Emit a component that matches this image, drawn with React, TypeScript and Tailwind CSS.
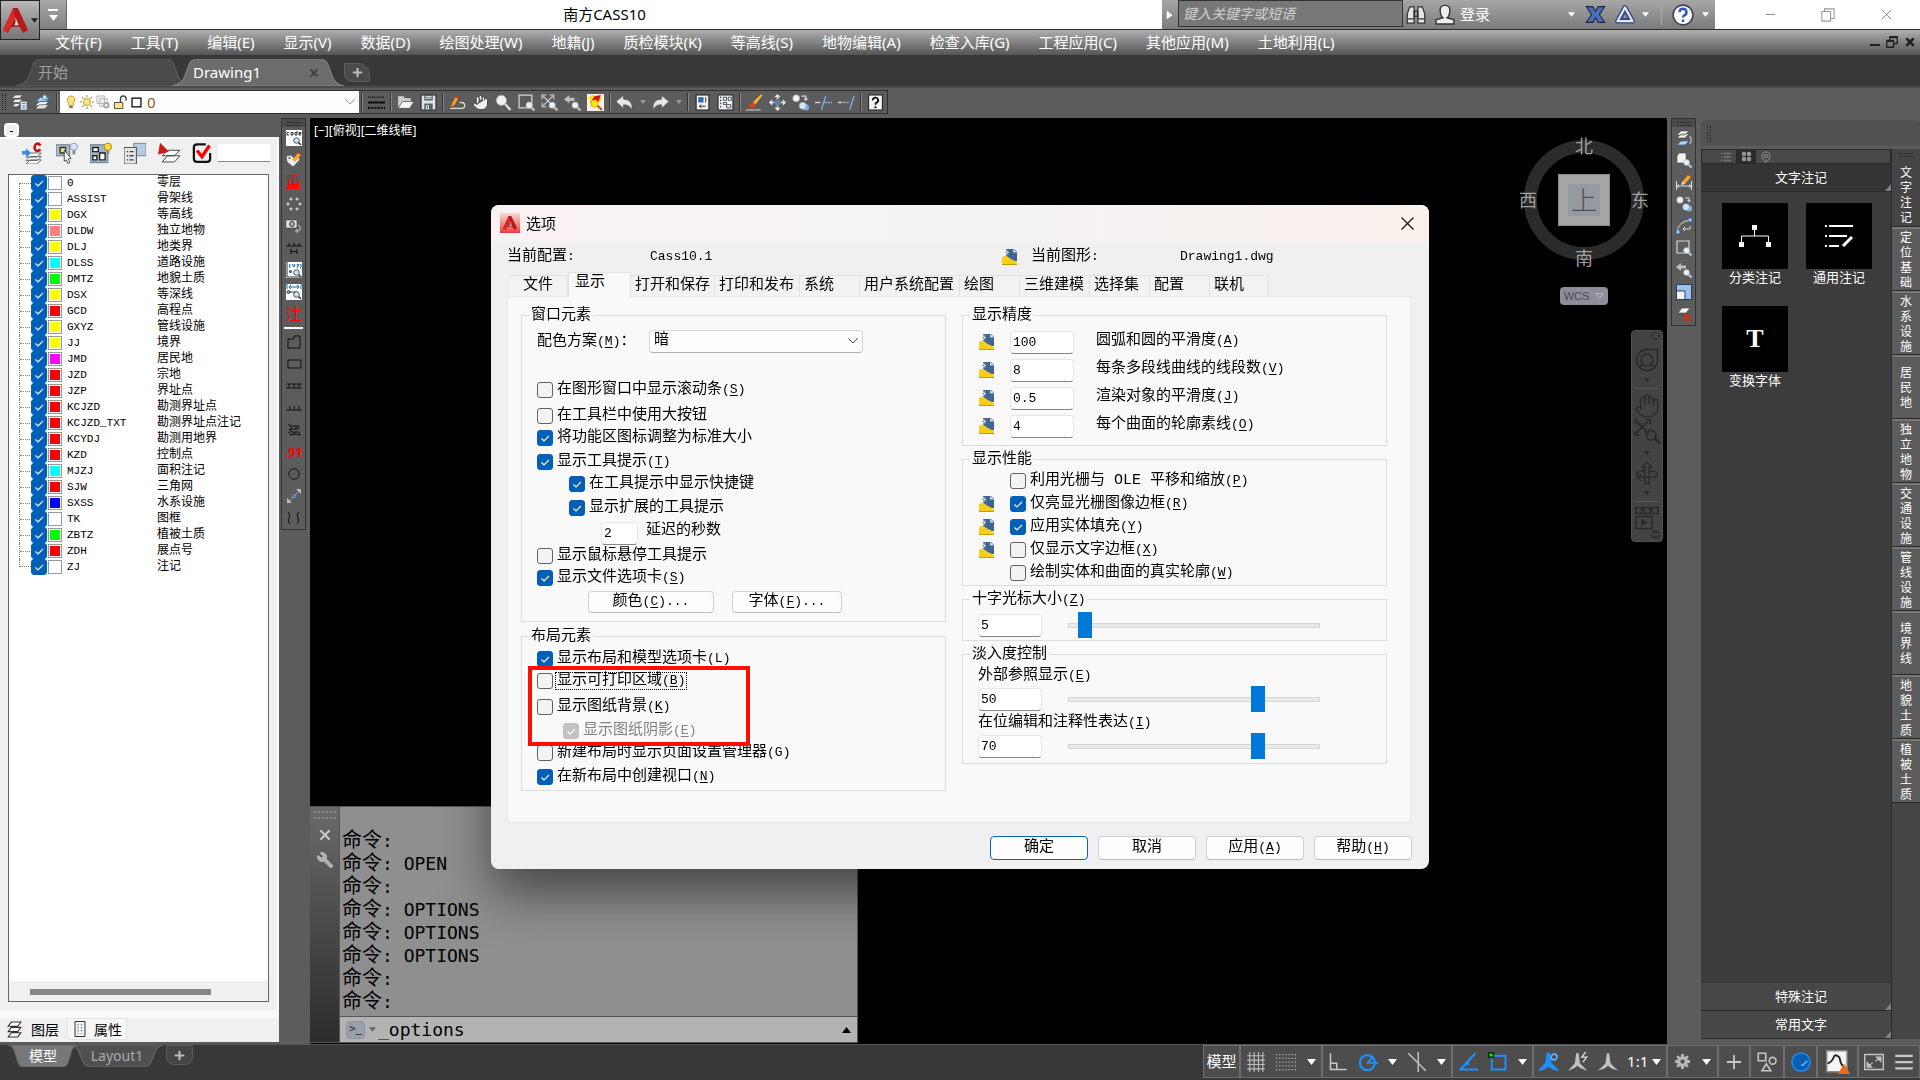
import { useState } from 'react'
import type { ReactNode } from 'react'
import clsx from 'clsx'
import { Hand, Wrench, X, Minus, Plus, MapPin, LayoutGrid, List } from 'lucide-react'

const layers = [
  ['0', '零层', '#ffffff'],
  ['ASSIST', '骨架线', '#ffffff'],
  ['DGX', '等高线', '#ffff00'],
  ['DLDW', '独立地物', '#ff7f7f'],
  ['DLJ', '地类界', '#ffff00'],
  ['DLSS', '道路设施', '#00ffff'],
  ['DMTZ', '地貌土质', '#00ff00'],
  ['DSX', '等深线', '#ffff00'],
  ['GCD', '高程点', '#ff0000'],
  ['GXYZ', '管线设施', '#ffff00'],
  ['JJ', '境界', '#ffff00'],
  ['JMD', '居民地', '#ff00ff'],
  ['JZD', '宗地', '#ff0000'],
  ['JZP', '界址点', '#ff0000'],
  ['KCJZD', '勘测界址点', '#ff0000'],
  ['KCJZD_TXT', '勘测界址点注记', '#ff0000'],
  ['KCYDJ', '勘测用地界', '#ff0000'],
  ['KZD', '控制点', '#ff0000'],
  ['MJZJ', '面积注记', '#00ffff'],
  ['SJW', '三角网', '#ff0000'],
  ['SXSS', '水系设施', '#0000ff'],
  ['TK', '图框', '#ffffff'],
  ['ZBTZ', '植被土质', '#00ff00'],
  ['ZDH', '展点号', '#ff0000'],
  ['ZJ', '注记', '#ffffff'],
]

const menus = [
  '文件(F)', '工具(T)', '编辑(E)', '显示(V)', '数据(D)', '绘图处理(W)', '地籍(J)', '质检模块(K)',
  '等高线(S)', '地物编辑(A)', '检查入库(G)', '工程应用(C)', '其他应用(M)', '土地利用(L)',
]

const paletteTabs = [
  '文字注记', '定位基础', '水系设施', '居民地', '独立地物', '交通设施', '管线设施', '境界线', '地貌土质', '植被土质',
]

const history = ['', 'OPEN', '', 'OPTIONS', 'OPTIONS', 'OPTIONS', '', '']

/* ---------- icons ---------- */

function Svg({ s = 18, children }: { s?: number; children: ReactNode }) {
  return (
    <svg width={s} height={s} viewBox="0 0 16 16" fill="none" className="shrink-0" aria-hidden="true">
      {children}
    </svg>
  )
}

const smallLens = (
  <>
    <path d="M12.5 12.5l3 3" stroke="#c8c8c8" strokeWidth="2" />
    <circle cx="10.5" cy="10.5" r="3" fill="#e8f0f6" stroke="#9aa4ac" strokeWidth=".6" />
  </>
)

const darkLens = (
  <>
    <path d="M12.5 12.5l2.5 2.5" stroke="#333" strokeWidth="1.6" />
    <circle cx="10.5" cy="10.5" r="2.8" fill="#cfe3f2" stroke="#345" strokeWidth=".9" />
  </>
)

const pencil = (
  <>
    <path d="M6 8l6-7 3 2-6 7z" fill="#f5a623" />
    <path d="M12 1l3 2 .8-1.2L13 0z" fill="#c0392b" />
    <path d="M6 8l3 2-3.6 1z" fill="#fff" />
  </>
)

const icons: Record<string, ReactNode> = {
  logo: (
    <>
      <path d="M6.500 0h3L16 14l-3 2-2.500-4h-5L3 16l-3-2z" fill="#b5191c" />
      <path d="M6.500 0L0 14l3 2 5-9z" fill="#d8292b" />
      <path d="M8 6l-2 5h4z" fill="#f3dede" />
      <path d="M8 6l-2.500 6 1.500-.5L8 9z" fill="#7d0d10" />
    </>
  ),
  layerProps: (
    <>
      <path d="M4 1h7L8 4H1zM4 5h7L8 8H1zM4 9h5l-3 3H1z" fill="#f2f2f2" stroke="#333" strokeWidth=".5" />
      <path d="M9 7h6v8H9z" fill="#e9f2fb" stroke="#666" strokeWidth=".6" />
      <path d="M10.500 9h3M10.500 11h3M10.500 13h3" stroke="#3a7bd5" />
    </>
  ),
  layerMatch: (
    <>
      <path d="M5 7h9l-4 4H1z" fill="#f2f2f2" stroke="#333" strokeWidth=".5" />
      <path d="M5 10h9l-4 4H1z" fill="#e0e0e0" stroke="#333" strokeWidth=".5" />
      <path d="M6 3h9l-4 4H2z" fill="#a9cdf0" stroke="#2d5f94" strokeWidth=".7" />
      <circle cx="10" cy="3" r="2.200" fill="#c9dff4" stroke="#2d5f94" strokeWidth=".6" />
    </>
  ),
  bulb: (
    <>
      <path d="M8 1a4.500 4.500 0 0 1 2.500 8.200V12h-5V9.200A4.500 4.500 0 0 1 8 1z" fill="#ffe27a" stroke="#a8861c" strokeWidth=".8" />
      <path d="M6 12.500h4v2.500H6z" fill="#777" />
    </>
  ),
  sun: (
    <>
      <path d="M8 0v2.500M8 13.500V16M0 8h2.500M13.500 8H16M2.300 2.300l1.800 1.800M11.900 11.900l1.800 1.800M13.700 2.300l-1.800 1.800M4.100 11.900l-1.800 1.800" stroke="#b48a1b" strokeWidth="1.200" />
      <circle cx="8" cy="8" r="4" fill="#ffe27a" stroke="#a8861c" strokeWidth=".8" />
    </>
  ),
  frozen: (
    <>
      <path d="M1 1h8v8H1zM4 4h8v8H4z" stroke="#b5b5b5" fill="#eee" />
      <circle cx="11" cy="11" r="3.500" fill="#aaa" />
      <circle cx="11" cy="11" r="1.300" fill="#fff" />
    </>
  ),
  lock: (
    <>
      <path d="M8 8V4a3 3 0 0 1 6 0v2" stroke="#444" strokeWidth="1.500" />
      <path d="M1.500 8h9v6.500h-9z" fill="#f6e58a" stroke="#444" />
    </>
  ),
  square: <path d="M2.500 2.500h11v11h-11z" fill="#fff" stroke="#000" strokeWidth="1.500" />,
  linetype: (
    <>
      <path d="M0 3h16" stroke="#111" strokeWidth="1.500" strokeDasharray="1 1" />
      <path d="M0 8h16" stroke="#111" strokeWidth="2" />
      <path d="M0 13h16" stroke="#111" strokeWidth="2" strokeDasharray="2 1" />
    </>
  ),
  open: (
    <>
      <path d="M1 2h5l1.500 2H13v3H5L1 13z" fill="#cfcfcf" />
      <path d="M5 7h11l-4 6.500H1z" fill="#f4f4f4" stroke="#444" strokeWidth=".6" />
    </>
  ),
  save: (
    <>
      <path d="M1 1h14v14H1z" fill="#dfe3e8" stroke="#2b2b2b" />
      <path d="M4 1h8v5H4zM4 9h8v6H4z" fill="#5a6470" />
      <path d="M5 2.500h6M5 4h6M6 11h2v3H6z" stroke="#fff" strokeWidth=".8" />
    </>
  ),
  sketch: (
    <>
      <path d="M1 13.500h11.500a2.800 2.800 0 0 0 0-5.500H10" stroke="#ddd" strokeWidth="1.200" />
      <path d="M1 13l1.500-4L6 2.500l3 1.700L5.500 10.500z" fill="#f0a030" stroke="#5e3a00" strokeWidth=".5" />
      <path d="M6 2.500l3 1.700 1-1.700-3-1.500z" fill="#c0392b" />
    </>
  ),
  lens: (
    <>
      <path d="M9 9l5.500 6" stroke="#ddd" strokeWidth="2.200" />
      <circle cx="6" cy="6" r="4.800" fill="#eef2f5" stroke="#999" strokeWidth=".6" />
    </>
  ),
  zoomWindow: (
    <>
      <path d="M1 1h12v12H1z" stroke="#d4d4d4" strokeWidth="1.200" />
      {smallLens}
    </>
  ),
  zoomExtents: (
    <>
      <path d="M2 2l9 9M11 2l-9 9M1 5V1h4M8 1h4v4M1 8v4h4" stroke="#d4d4d4" />
      {smallLens}
    </>
  ),
  zoomPrev: (
    <>
      <path d="M0 5l5-4v2.500h5v3H5V9z" fill="#b9bdbd" />
      {smallLens}
    </>
  ),
  zoomRed: (
    <>
      <path d="M0 0h16v16H0z" fill="#f7f2e8" />
      <path d="M1 4q3-5 7-2l5-1v6L9 9z" fill="#ffe600" />
      <path d="M3 8l4-6 6-1-2 6z" fill="#e01010" />
      <circle cx="7" cy="9" r="3.500" fill="#ffe600" stroke="#c98a00" strokeWidth=".6" />
      <path d="M10 11l4 4" stroke="#b55a10" strokeWidth="2" />
    </>
  ),
  undo: <path d="M0 7l7-5.500V5q9 0 8 10-2-5-8-5v3.500z" fill="#e6e6e6" stroke="#333" strokeWidth=".4" />,
  redo: <path d="M16 7L9 1.500V5Q0 5 1 15q2-5 8-5v3.500z" fill="#e6e6e6" stroke="#333" strokeWidth=".4" />,
  sheet: (
    <>
      <path d="M2 1h12v14H2z" fill="#f2f2f2" stroke="#222" />
      <path d="M4 3h5v5H4z" fill="#2c6bb8" />
      <path d="M11 3v5M5 11.500h6M5 11.500l2-1.500M5 11.500l2 1.500" stroke="#333" strokeWidth=".9" />
    </>
  ),
  sheets: (
    <>
      <path d="M1 1h14v14H1z" fill="#f2f2f2" stroke="#222" />
      <path d="M3 3h1M3 6h1M3 9h1M3 12h1" stroke="#222" strokeWidth="1.500" />
      <path d="M6 3h3v3H6zM10.500 3h3v3h-3zM6 8h3v2H6zM9 10h4v3H9z" stroke="#456" strokeWidth=".9" />
    </>
  ),
  brush: (
    <>
      <path d="M0 15h14" stroke="#ccc" />
      <path d="M6 8l8-8 2 1-7 9z" fill="#f0b23a" stroke="#714a00" strokeWidth=".4" />
      <path d="M3 13q0-5 4-5l2 2q-1 4-6 3z" fill="#d3451a" />
    </>
  ),
  move: (
    <>
      <path d="M8 0l3 3H5zM8 16l3-3H5zM0 8l3-3v6zM16 8l-3-3v6z" fill="#e6e6e6" />
      <path d="M8 2v3M8 11v3M2 8h3M11 8h3" stroke="#e6e6e6" strokeWidth="1.500" />
      <path d="M6.500 6.500h3v3h-3z" stroke="#5aa0f2" />
    </>
  ),
  copy: (
    <>
      <circle cx="4" cy="4" r="3.300" fill="#f2f2f2" stroke="#999" strokeWidth=".5" />
      <circle cx="13" cy="12.500" r="3" fill="#7fb2e5" />
      <circle cx="10" cy="11" r="3.300" fill="#d6e8f8" stroke="#6c9ac6" strokeWidth=".5" />
      <path d="M9 2h4v3M11.500 4l1.500 2 1.500-2" stroke="#ddd" />
    </>
  ),
  trim: (
    <>
      <path d="M0 8h5" stroke="#ddd" strokeWidth="1.200" />
      <path d="M10 2L6 15M9 8h2M12 8h2M15 8h1" stroke="#7fb2f0" strokeWidth="1.200" />
    </>
  ),
  extend: (
    <>
      <path d="M0 8h4" stroke="#ddd" strokeWidth="1.200" />
      <path d="M5 8h2M8 8h2M15 2l-4 13" stroke="#7fb2f0" strokeWidth="1.200" />
    </>
  ),
  help: (
    <>
      <path d="M1.500 1h13v14h-13z" fill="#f4f4f4" stroke="#222" />
      <path d="M5.500 6a2.500 2.500 0 1 1 3.500 2.200q-1 .5-1 1.800M8 11.500v2" stroke="#111" strokeWidth="1.800" />
    </>
  ),
  codeLens: (
    <>
      <path d="M0 0h16v16H0z" fill="#fff" />
      <path d="M3 2.500H1v2.500h2M5 2.500h2V5H5zM11 1v4H9V2.500h2M15 5h-2V2.500h2v1.200h-2" stroke="#222" strokeWidth=".9" />
      {darkLens}
    </>
  ),
  tagPencil: (
    <>
      <path d="M0 4l5-1 3 3 4-2 2 4-7 7-6-5z" fill="#e8e8e8" stroke="#333" strokeWidth=".6" />
      <circle cx="3.500" cy="6" r="1" fill="#444" />
      {pencil}
    </>
  ),
  points: (
    <path d="M4 2h2v2H4zM10 2h2v2h-2zM1 7h2v2H1zM13 7h2v2h-2zM4 12h2v2H4zM10 12h2v2h-2z" fill="#9fb4c4" stroke="#ddd" strokeWidth=".6" />
  ),
  camera: (
    <>
      <path d="M0 2h11v8H0z" fill="#e6e6e6" stroke="#333" strokeWidth=".6" />
      <circle cx="6" cy="6" r="2.500" fill="#9bb" stroke="#333" />
      <path d="M12 7q4 2 1 6h-3M11.500 11L9.500 13l2 2" stroke="#ccc" />
    </>
  ),
  slopeH: <path d="M0 6h16M3 6V3M8 6V3M13 6V3M5 9v5M11 9v5M5 11.500h6" stroke="#111" strokeWidth="1.100" />,
  xyLens: (
    <>
      <path d="M0 0h16v16H0z" fill="#fff" />
      <path d="M1 0v15h15" stroke="#333" />
      <path d="M4 2Q2.500 4 4 6M6 2l2 3M9 2L8 5M11 2l1 2M13 2l-2 4M14.500 2q1.500 2 0 4" stroke="#1464b4" />
      <circle cx="4.500" cy="9.500" r="1.500" fill="#1464b4" />
      {darkLens}
    </>
  ),
  distLens: (
    <>
      <path d="M0 0h16v16H0z" fill="#fff" />
      <path d="M3 3h10M3 3l2-2M3 3l2 2M13 3l-2-2M13 3l-2 2M1 0v5M15 0v5" stroke="#1464b4" />
      <path d="M2 8h8" stroke="#333" />
      <circle cx="2.500" cy="8" r="1.500" stroke="#333" />
      {darkLens}
    </>
  ),
  poly: <path d="M2 14V5h6V2h6v12z" stroke="#111" />,
  rect: <path d="M2 4h13v8H2z" stroke="#111" />,
  wall: <path d="M0 6h16M0 10h16M3 6v4M8 6v4M13 6v4" stroke="#111" />,
  slope: <path d="M0 10h16M4 10V6M8.500 10V6M13 10V6" stroke="#111" />,
  crag: <path d="M2 2l3 2h8l-1 3H6L3 8l3 2h7l1 3-4-1-6 1M5 4v4M10 4v3M8 10v3M2 10l4 3" stroke="#111" />,
  circleDot: (
    <>
      <circle cx="8" cy="8" r="5.200" stroke="#111" />
      <path d="M7.500 8h1" stroke="#111" />
    </>
  ),
  dblArrow: (
    <>
      <path d="M3 13L13 3" stroke="#bbb" strokeDasharray="3 1" />
      <path d="M15 1v5l-5-5zM1 15v-5l5 5z" fill="#bbb" />
      <path d="M7 7h2.500v2.500H7z" stroke="#4b8ef0" />
    </>
  ),
  waves: <path d="M2 2q3 3 1 6t1 6M13 2q-3 3-1 6t-1 6" stroke="#111" />,
  layerSwap: (
    <>
      <path d="M5 1h8L9 5H1zM5 4h8L9 8H1z" fill="#f2f2ea" stroke="#333" strokeWidth=".5" />
      <path d="M5 11h8l-4 4H1z" fill="#b4d2f2" stroke="#2d5f94" strokeWidth=".7" />
      <path d="M13 7h2v6h-2" stroke="#ccc" />
    </>
  ),
  boxLens: (
    <>
      <path d="M1 4l2-3h7v7l-2 3H1z" fill="#f2f2f2" stroke="#333" strokeWidth=".5" />
      {smallLens}
    </>
  ),
  dimPencil: (
    <>
      <path d="M.5 7v9M15.500 7v9M1 12h14M1 12l2-1.500M1 12l2 1.500M15 12l-2-1.500M15 12l-2 1.500" stroke="#ddd" />
      {pencil}
    </>
  ),
  arcEdit: (
    <>
      <path d="M1 14Q2 4 14 2" stroke="#aaa" strokeWidth="1.300" />
      <path d="M.5 12.500h3v3h-3zM12.500.5h3v3h-3z" fill="#cfe0fb" stroke="#3f86ee" />
      <path d="M14 8v3H7M9 9l-2 2 2 2" stroke="#ddd" />
    </>
  ),
  scaleBox: (
    <>
      <path d="M.5.5h15v15H.5z" fill="#9cc0ea" stroke="#20406c" />
      <path d="M.5 7h8.500v8.500H.5z" fill="#f4f4f4" stroke="#20406c" />
    </>
  ),
  layerDelete: (
    <>
      <path d="M6 2h8l-4 5H2z" fill="#f2f2f2" stroke="#333" strokeWidth=".5" />
      <path d="M8 8l6 7M14 8l-6 7" stroke="#e02a10" strokeWidth="2.200" />
    </>
  ),
  drawingFile: (
    <>
      <path d="M4 0h8l3 3v9H4z" fill="#3f6593" />
      <path d="M11 0l4 3.500h-4z" fill="#cbd9e8" />
      <path d="M1 3.500h6M4 .5v6M2 1.500l4 4M6 1.500l-4 4" stroke="#fff" strokeWidth=".9" />
      <path d="M3.500 3h1v1h-1z" fill="#234" />
      <path d="M0 8l4-1.500 4 3 7 3.500v3H0z" fill="#f5cf1b" />
      <path d="M0 15.500h15" stroke="#c99a00" />
    </>
  ),
  binoculars: (
    <>
      <path d="M1 14.500V7l2-5.500h3.500v13zM9.500 14.500v-13H13L15 7v7.500z" fill="#e6e6e6" stroke="#333" />
      <path d="M6.500 5h3v4h-3zM1.500 11h5M9.500 11h5" stroke="#333" />
    </>
  ),
  user: (
    <>
      <path d="M8 1q4 0 3.500 4.500Q11 9 9.500 10l5 1.500v3h-13v-3l5-1.500Q5 9 4.500 5.500 4 1 8 1z" fill="#eee" stroke="#333" />
    </>
  ),
  exchange: <path d="M1 2h5l2 3.500L10 2h5l-4 6 4 6h-5l-2-3.500L6 14H1l4-6z" fill="#4a6fc0" stroke="#223" strokeWidth=".8" />,
  a360: (
    <>
      <path d="M8 2.500l5.500 10h-11z" stroke="#35457c" strokeWidth="3.400" strokeLinejoin="round" />
      <path d="M8 2.500l5.500 10h-11z" stroke="#e4e8f4" strokeWidth="1.600" strokeLinejoin="round" />
      <path d="M8 6.500l2 4H6z" fill="#8d96b8" stroke="#35457c" strokeWidth=".7" />
    </>
  ),
  helpRound: (
    <>
      <circle cx="8" cy="8" r="7.200" fill="#fff" stroke="#445" strokeWidth="1.200" />
      <path d="M5.500 6a2.500 2.500 0 1 1 3.500 2.200q-1 .5-1 1.600M8 11.200v1.800" stroke="#2956c4" strokeWidth="1.800" />
    </>
  ),
  toC: (
    <>
      <path d="M6 8h8l-3 3H3zM6 10.500h8l-3 3H3zM6 13h8l-3 3H3z" fill="#fff" stroke="#555" strokeWidth=".6" />
      <path d="M0 6.500h3V4.500L6.500 8 3 11.500V9H0z" fill="#3c8be0" />
      <path d="M13.500 2.500Q12 .5 10.300 1.500 8.500 3 9.500 5.500q1.500 2 4 0" stroke="#c2120f" strokeWidth="1.800" />
    </>
  ),
  pickBulb: (
    <>
      <path d="M0 2h10v8H0z" fill="#a8bccb" stroke="#567" strokeWidth=".6" />
      <path d="M3 4h4v4H3z" fill="#f7e27a" stroke="#333" />
      <path d="M6 6l5 6-2 .3 1 2.700-1.500.5-1-2.500L6 14z" fill="#fff" stroke="#333" strokeWidth=".6" />
      <circle cx="13" cy="3.500" r="2.600" fill="#d6e8fb" stroke="#88a" strokeWidth=".6" />
      <path d="M12 6h2v3h-2z" fill="#888" />
    </>
  ),
  blocksBulb: (
    <>
      <path d="M0 2h13v13H0z" fill="#9fb3c3" stroke="#567" strokeWidth=".6" />
      <path d="M2 4h4v3H2zM2 10h3v3H2zM7 8h4v5H7z" fill="#fff" stroke="#222" />
      <circle cx="13" cy="3.500" r="2.700" fill="#ffd84a" stroke="#a77d00" strokeWidth=".6" />
      <path d="M12 6h2v2.500h-2z" fill="#888" />
    </>
  ),
  listPic: (
    <>
      <path d="M7 1h9v9H7z" fill="#b4cde0" stroke="#678" strokeWidth=".6" />
      <path d="M0 4h9v12H0z" fill="#e6e6e6" stroke="#555" strokeWidth=".8" />
      <path d="M2 7h1M4 7h3M2 10h1M4 10h3M2 13h1M4 13h3" stroke="#444" />
    </>
  ),
  redLayers: (
    <>
      <path d="M7 6h9l-4 4H3zM7 10h9l-4 4.500H3z" fill="#fff" stroke="#444" strokeWidth=".7" />
      <path d="M0 9l1.500-8.500L8 7z" fill="#c81d1d" />
    </>
  ),
  redCheck: (
    <>
      <path d="M11 1H4Q1.500 1 1.500 3.500v9Q1.500 15 4 15h8q2.500 0 2.500-2.500V8" stroke="#111" strokeWidth="1.800" />
      <path d="M4 6l4 5 6-9" stroke="#f00" strokeWidth="2.600" />
    </>
  ),
  sheetsTab: <path d="M5 1h9l-3 4H2zM5 6h9l-3 4H2zM5 11h9l-3 4H2z" fill="#fff" stroke="#333" />,
  propsTab: (
    <>
      <path d="M3 .5h10v15H3z" fill="#f4f4f4" stroke="#333" />
      <path d="M6 3v10M9.500 3v10" stroke="#7a96ac" strokeWidth="1.500" strokeDasharray="1.500 1.500" />
    </>
  ),
  // status bar
  grid: <path d="M3 0v16M6.500 0v16M10 0v16M13.500 0v16M1 3h14M1 6.500h14M1 10h14M1 13.500h14" stroke="#bdbdbd" strokeWidth=".9" />,
  snap: <path d="M0 2h16M0 5h16M0 8h16M0 11h16M0 14h16" stroke="#b0b0b0" strokeDasharray="1 1.500" />,
  ortho: <path d="M2 1v13h13M2 9h5v5" stroke="#c8c8c8" strokeWidth="1.200" />,
  polar: (
    <>
      <circle cx="7.500" cy="8.500" r="6" stroke="#1e90ff" strokeWidth="1.800" />
      <path d="M16 8.500H8L12 3" stroke="#1e90ff" strokeWidth="1.600" />
    </>
  ),
  iso: <path d="M1 1l14 14M9 0v16" stroke="#c0c0c0" strokeWidth="1.200" />,
  otrack: (
    <>
      <path d="M14 1L2 14h14" stroke="#1e90ff" strokeWidth="1.600" />
      <path d="M6 7.500h3v3H6z" fill="#1e90ff" />
    </>
  ),
  osnap: (
    <>
      <path d="M3 3h11v11H3z" stroke="#1e90ff" strokeWidth="1.500" />
      <path d="M0 0h5v5H0z" fill="#0b3d0b" />
      <path d="M1.500 1.500h2v2h-2z" fill="#1cff1c" />
    </>
  ),
  annoBlue: (
    <>
      <path d="M6.500 1h2l1 8 6 6-5.500-2-2.500-2-2.500 2-5 2 5.500-6z" fill="#1e90ff" stroke="#1e90ff" />
      <circle cx="12" cy="4" r="2.300" stroke="#5cb2ff" strokeWidth="1.300" />
    </>
  ),
  annoBolt: (
    <>
      <path d="M6.500 1h2l1 8 6 6-5.500-2-2.500-2-2.500 2-5 2 5.500-6z" fill="#c0c0c0" />
      <path d="M14 0l-3 4h4l-3 4" stroke="#e0e0e0" />
    </>
  ),
  anno: <path d="M7 1h2l1 8 6 6-5.500-2L8 11l-2.500 2L0 15l6-6z" fill="#c0c0c0" />,
  gear: (
    <>
      <path d="M8 1v14M1 8h14M3 3l10 10M13 3L3 13" stroke="#b8b8b8" strokeWidth="2.600" />
      <circle cx="8" cy="8" r="5" fill="#b8b8b8" />
      <circle cx="8" cy="8" r="2" fill="#4d4d4d" />
    </>
  ),
  isolate: (
    <>
      <path d="M1 1h6v6H1zM7.500 9.500L11 15H4z" stroke="#c4c4c4" strokeWidth="1.300" />
      <circle cx="12.500" cy="7" r="2.700" stroke="#c4c4c4" strokeWidth="1.300" />
    </>
  ),
  hardware: (
    <>
      <circle cx="8" cy="8" r="7.300" fill="#0a5fb4" stroke="#1e90ff" />
      <path d="M8 10.500h1.500L13 7" stroke="#5cb2ff" strokeWidth="1.200" />
    </>
  ),
  graphWarn: (
    <>
      <path d="M.5.500h13.500v14H.5z" fill="#f4f4f4" stroke="#888" />
      <path d="M1 9Q4 8 5 5t4 0q1 6 4 7" stroke="#222" strokeWidth="1.200" />
      <path d="M12 9l4 7H8z" fill="#f0691c" />
    </>
  ),
  clean: (
    <>
      <path d="M.5 2h15v12H.5z" stroke="#c4c4c4" strokeWidth="1.200" />
      <path d="M10 4h3.500v3.500zM6 12H2.500V8.500zM9 7.500L12 5M4 11l3-2.500" fill="#c4c4c4" stroke="#c4c4c4" />
    </>
  ),
  lines: <path d="M1 3h14M1 8h14M1 13h14" stroke="#c8c8c8" strokeWidth="1.800" />,
}

function Icon({ name, s }: { name: string; s?: number }) {
  return <Svg s={s}>{icons[name]}</Svg>
}

function Caret({ className }: { className?: string }) {
  return (
    <svg width="9" height="6" viewBox="0 0 9 6" className={clsx('shrink-0', className)} aria-hidden="true">
      <path d="M0 0h9L4.500 6z" fill="currentColor" />
    </svg>
  )
}

function Grip({ vertical }: { vertical?: boolean }) {
  return (
    <span
      className={clsx(
        'block shrink-0 border-dotted border-[#222]',
        vertical ? 'ml-0.5 h-4 w-1 border-x' : 'mx-auto mt-0.5 h-1 w-3.5 border-y',
      )}
    />
  )
}

/* ---------- top of the window ---------- */

function TitleBar() {
  return (
    <header className="flex h-[29px] bg-white">
      <button aria-label="应用程序菜单" className="z-10 flex h-10 w-10 shrink-0 items-center justify-between border border-[#222] bg-linear-to-b from-[#b8b8b8] to-[#777] pl-0.5 pr-px text-[#223]">
        <Icon name="logo" s={25} />
        <Caret className="h-[5px] w-[7px]" />
      </button>
      <button aria-label="自定义快速访问工具栏" className="flex w-[27px] shrink-0 flex-col items-center justify-center gap-1 border-r border-[#666] bg-linear-to-b from-[#a8a8a8] to-[#808080] text-white">
        <span className="h-0.5 w-2.5 bg-white" />
        <Caret />
      </button>
      <h1 className="flex-1 pr-5 text-center text-[15px] leading-[28px] text-black">南方CASS10</h1>
      <div className="flex h-[29px] items-center bg-linear-to-b from-[#a6a6a6] to-[#7b7b7b] text-white">
        <button aria-label="展开" className="flex w-4 justify-center">
          <Caret className="-rotate-90" />
        </button>
        <input
          aria-label="搜索"
          placeholder="键入关键字或短语"
          className="mb-0.5 h-[27px] w-[225px] border border-[#333] bg-[#787878] px-1 text-[14px] italic placeholder:text-[#d0d0d0]"
        />
        <button aria-label="搜索" className="ml-[3px]"><Icon name="binoculars" s={20} /></button>
        <button className="ml-2 flex items-center gap-1 text-[15px]">
          <Icon name="user" s={22} />
          登录
        </button>
        <Caret className="ml-[78px] h-[5px] w-[7px]" />
        <button aria-label="Exchange" className="ml-2.5"><Icon name="exchange" s={21} /></button>
        <button aria-label="A360" className="ml-2"><Icon name="a360" s={22} /></button>
        <Caret className="ml-1.5 h-[5px] w-[7px]" />
        <span className="ml-3 h-5 w-px bg-[#aaa]" />
        <button aria-label="帮助" className="ml-2.5"><Icon name="helpRound" s={22} /></button>
        <Caret className="ml-2 mr-1.5 h-[5px] w-[7px]" />
      </div>
      <div className="flex w-[205px] items-center pl-[26px] text-[#888]">
        <button aria-label="最小化" className="flex w-[58px] justify-center"><Minus size={15} strokeWidth={1.5} /></button>
        <button aria-label="还原" className="flex w-[58px] justify-center">
          <Svg s={14}><path d="M1 4h10v11H1zM4 4V1h11v11h-4" stroke="#999" strokeWidth="1.200" /></Svg>
        </button>
        <button aria-label="关闭" className="flex w-[58px] justify-center"><X size={17} strokeWidth={1.3} /></button>
      </div>
    </header>
  )
}

function MenuBar() {
  return (
    <nav className="flex h-[26px] items-center border-t border-[#2c2c2c] bg-linear-to-b from-[#b0b0b0] to-[#555] pb-0.5 pl-[55px] pr-1 text-[15px] text-white">
      <div className="flex flex-1 gap-[29px] whitespace-nowrap">
        {menus.map((m) => (
          <button key={m} className="leading-[22px]">{m}</button>
        ))}
      </div>
      <div className="flex items-center gap-1.5">
        <button aria-label="最小化文档" className="mt-1.5 h-0.5 w-2.5 bg-[#222]" />
        <button aria-label="还原文档">
          <Svg s={12}><path d="M1 6h9v9H1zM5 6V1h10v9h-5M1 7h9M5 2h10" stroke="#222" strokeWidth="1.800" /></Svg>
        </button>
        <button aria-label="关闭文档" className="text-[#222]"><X size={12} strokeWidth={5} /></button>
      </div>
    </nav>
  )
}

function DocTab({ active, className, children }: { active?: boolean; className?: string; children: ReactNode }) {
  return (
    <button className={clsx('relative flex h-[27px] items-center text-[15px]', active ? 'z-10 text-white' : 'text-[#a0a0a0]', className)}>
      <svg className="absolute inset-0 h-full w-full" viewBox="0 0 170 27" preserveAspectRatio="none" aria-hidden="true">
        <path
          d="M0 27Q10 26 13 16L17 5Q19 0 25 0H145Q152 0 154 5L158 16Q161 26 170 27z"
          fill={active ? '#6c6c6c' : '#4a4a4a'}
          stroke={active ? '#808080' : '#5c5c5c'}
        />
      </svg>
      <span className="relative flex w-full items-center justify-between">{children}</span>
    </button>
  )
}

function DocTabs() {
  return (
    <div className="flex h-[31px] items-end bg-[#383838]">
      <DocTab className="ml-4 w-[174px] pl-[22px]">开始</DocTab>
      <DocTab active className="-ml-[18px] w-[172px] pl-[21px] pr-6">
        Drawing1
        <X size={12} strokeWidth={4} className="text-[#444]" />
      </DocTab>
      <button aria-label="新图形" className="mb-1 flex h-[19px] w-[26px] items-center justify-center rounded-tr-xl rounded-bl-lg border border-[#5c5c5c] bg-[#4a4a4a] text-[#bbb]">
        <Plus size={13} strokeWidth={4} />
      </button>
    </div>
  )
}

function ToolBtn({ name, label }: { name: string; label?: string }) {
  return (
    <button aria-label={label ?? name} className="flex w-[23px] shrink-0 justify-center">
      <Icon name={name} s={17} />
    </button>
  )
}

function Sep() {
  return <span className="mx-0.5 h-[18px] w-0.5 shrink-0 border-l border-[#333] bg-[#888]" />
}

function Toolbar() {
  return (
    <div className="border-t-2 border-[#4c4c4c] bg-[#5c5c5c] pb-1 pt-0.5">
      <div className="flex h-6 w-fit items-center border border-l-0 border-[#2e2e2e]">
        <Grip vertical />
        <span className="w-0.5" />
        <ToolBtn name="layerProps" />
        <ToolBtn name="layerMatch" />
        <Sep />
        <button aria-label="图层" className="flex h-[22px] w-[299px] items-center gap-0.5 bg-[#fdfdfd] pl-1 pr-1 text-[15px] text-[#8a5a2c]">
          <Icon name="bulb" s={14} />
          <Icon name="sun" s={14} />
          <Icon name="frozen" s={15} />
          <Icon name="lock" s={15} />
          <Icon name="square" s={13} />
          <span className="ml-0.5 flex-1 text-left">0</span>
          <svg width="10" height="6" viewBox="0 0 10 6" fill="none" aria-hidden="true"><path d="M.5.5L5 5 9.500.5" stroke="#999" /></svg>
        </button>
        <Sep />
        <ToolBtn name="linetype" />
        <Sep />
        <ToolBtn name="open" />
        <ToolBtn name="save" />
        <Sep />
        <ToolBtn name="sketch" />
        <button aria-label="平移" className="flex w-[23px] justify-center text-[#333]">
          <Hand size={17} fill="#f2f2f2" strokeWidth={1.2} />
        </button>
        {['lens', 'zoomWindow', 'zoomExtents', 'zoomPrev', 'zoomRed'].map((n) => <ToolBtn key={n} name={n} />)}
        <Sep />
        <ToolBtn name="undo" />
        <span className="flex w-[13px] justify-center text-[#999]"><Caret className="h-1 w-1.5" /></span>
        <ToolBtn name="redo" />
        <span className="flex w-[13px] justify-center text-[#999]"><Caret className="h-1 w-1.5" /></span>
        <Sep />
        <ToolBtn name="sheet" />
        <ToolBtn name="sheets" />
        <Sep />
        {['brush', 'move', 'copy', 'trim', 'extend'].map((n) => <ToolBtn key={n} name={n} />)}
        <Sep />
        <ToolBtn name="help" />
      </div>
    </div>
  )
}

/* ---------- layer panel ---------- */

function Check({ id, checked, disabled }: { id: string; checked?: boolean; disabled?: boolean }) {
  return (
    <span className="relative flex h-4 w-4 shrink-0">
      <input
        id={id}
        type="checkbox"
        defaultChecked={checked}
        disabled={disabled}
        className="peer h-4 w-4 appearance-none rounded-[3px] border border-[#626262] bg-[#f3f3f3] checked:border-[#005fb8] checked:bg-[#005fb8] disabled:border-[#c2c2c2] disabled:bg-[#c2c2c2]"
      />
      <svg viewBox="0 0 16 16" fill="none" className="pointer-events-none absolute inset-0 hidden peer-checked:block" aria-hidden="true">
        <path d="M4.500 8.500L7 11l5-5" stroke="#fff" strokeWidth="1.200" />
      </svg>
    </span>
  )
}

function LayerPanel() {
  return (
    <aside className="flex w-[279px] shrink-0 flex-col">
      <button aria-label="折叠" className="ml-1 mt-[5px] h-[14px] w-[15px] rounded-sm border-2 border-white bg-[#f0f0f0] text-[12px] leading-[9px] text-black">-</button>
      <div className="flex flex-1 flex-col border-2 border-l-0 border-[#fafafa] bg-[#f0f0f0] pb-2 pl-2 pr-2">
        <div className="flex h-[35px] items-center pb-2 pl-3.5">
          {['toC', 'pickBulb', 'blocksBulb', 'listPic', 'redLayers'].map((n) => (
            <button key={n} aria-label={n} className="mr-3 flex"><Icon name={n} s={22} /></button>
          ))}
          <button aria-label="redCheck" className="mr-1.5 flex"><Icon name="redCheck" s={20} /></button>
          <input aria-label="过滤图层" className="h-[18px] w-[52px] border-b border-[#888] bg-white px-1 text-[12px]" />
        </div>
        <div className="flex flex-1 flex-col border border-[#666] bg-white">
          <ul className="flex-1 pl-2.5 font-['Liberation_Mono','Noto_Sans_CJK_SC',monospace] text-black">
            {layers.map(([name, desc, color], i) => (
              <li key={name} className="flex h-4 items-center">
                <span
                  className={clsx(
                    'w-3 shrink-0 border-dotted border-[#777]',
                    i === 0 && 'h-2 self-end border-l border-t',
                    i === layers.length - 1 && 'h-2 self-start border-b border-l',
                    i > 0 && i < layers.length - 1 && 'relative h-4 border-l after:absolute after:top-2 after:w-3 after:border-t after:border-dotted after:border-[#777]',
                  )}
                />
                <Check id={`layer-${name}`} checked />
                <span className="mx-px h-3.5 w-3.5 shrink-0 border border-[#999] p-px">
                  <span className="block h-full w-full" style={{ backgroundColor: color }} />
                </span>
                <label htmlFor={`layer-${name}`} className="flex flex-1 pl-1 text-[11px] leading-4">
                  <span className="w-[90px]">{name}</span>
                  <span className="text-[12px]">{desc}</span>
                </label>
              </li>
            ))}
          </ul>
          <div className="flex h-5 items-center bg-[#f0f0f0] pb-1.5 pl-[21px]">
            <span className="mt-2 h-1.5 w-[181px] bg-[#868686]" />
          </div>
        </div>
      </div>
      <div className="h-1.5 bg-[#fafafa]" />
      <div className="mb-0.5 flex h-6 items-start bg-[#f0f0f0] text-[14px] text-black">
        <button className="flex h-[22px] items-center gap-2 pl-1.5 pr-2"><Icon name="sheetsTab" s={17} />图层</button>
        <button className="flex h-[22px] items-center gap-1.5 border border-[#e4e4e4] bg-[#f6f6f6] px-1"><Icon name="propsTab" s={16} />属性</button>
      </div>
    </aside>
  )
}

function SideBtn({ name, text }: { name?: string; text?: string }) {
  return (
    <button aria-label={text ?? name} className="flex h-[22px] w-full items-center justify-center text-[16px] leading-none text-[#f00]">
      {name ? <Icon name={name} s={16} /> : text}
    </button>
  )
}

function DrawBar() {
  return (
    <div className="ml-0.5 mr-1 h-fit w-[25px] shrink-0 border border-[#333] bg-[#5c5c5c]">
      <div className="h-2 bg-[#4a4a4a] pt-px"><Grip /></div>
      <SideBtn name="codeLens" />
      <SideBtn name="tagPencil" />
      <SideBtn text="重" />
      {['points', 'camera', 'slopeH', 'xyLens', 'distLens'].map((n) => <SideBtn key={n} name={n} />)}
      <SideBtn text="注" />
      <div className="mx-0.5 my-0.5 h-0.5 bg-white" />
      {['poly', 'rect', 'wall', 'slope', 'crag'].map((n) => <SideBtn key={n} name={n} />)}
      <button className="block h-[22px] w-full text-[13px] font-bold leading-[22px] text-[#f00]">.91</button>
      {['circleDot', 'dblArrow', 'waves'].map((n) => <SideBtn key={n} name={n} />)}
    </div>
  )
}

function ViewBar() {
  return (
    <div className="ml-1 mr-[5px] h-fit w-[25px] shrink-0 border border-[#333] bg-[#5c5c5c]">
      <div className="h-2 bg-[#4a4a4a] pt-px"><Grip /></div>
      {['layerSwap', 'boxLens', 'dimPencil', 'copy', 'arcEdit', 'zoomWindow', 'zoomPrev', 'scaleBox', 'layerDelete'].map((n) => (
        <SideBtn key={n} name={n} />
      ))}
    </div>
  )
}

/* ---------- drawing area ---------- */

function ViewCube() {
  return (
    <div className="absolute right-[18px] top-[15px] flex w-[130px] flex-col items-center">
      <div className="relative flex h-[134px] w-[130px] items-center justify-center text-[18px] leading-none text-[#a0a0a0]">
        <span className="absolute h-[120px] w-[120px] rounded-full border-[13px] border-[#2b2b2b]" />
        <span className="absolute top-1">北</span>
        <span className="absolute bottom-0">南</span>
        <span className="absolute left-0">西</span>
        <span className="absolute right-0">东</span>
        <span className="relative flex h-[52px] w-[52px] items-center justify-center border border-[#8a8a8a] bg-[#a6a6a6]">
          <span className="flex h-8 w-8 items-center justify-center bg-[#9599a0] text-[26px] font-light text-[#4c5058]">上</span>
        </span>
      </div>
      <button className="mt-5 flex h-[18px] w-12 items-center justify-center gap-1.5 rounded bg-[#8d8d9b] font-['Liberation_Sans',sans-serif] text-[11px] text-[#4b4b55]">
        WCS
        <svg width="9" height="6" viewBox="0 0 9 6" fill="none" aria-hidden="true"><path d="M.5.5h8L4.500 5z" stroke="#bbb" /></svg>
      </button>
    </div>
  )
}

function NavBar() {
  return (
    <div className="absolute right-1 top-[212px] flex h-[212px] w-8 flex-col items-center rounded border border-[#505050] bg-[#434343] text-[#2a2a2a]">
      <X size={9} strokeWidth={3} className="mr-0.5 self-end rounded-full bg-[#333] text-[#555]" />
      <span className="mt-2 flex">
        <Svg s={24}>
          <path d="M8 1h7v7a7 7 0 1 1-7-7z" stroke="#2a2a2a" />
          <circle cx="8" cy="8" r="4" stroke="#2a2a2a" />
          <path d="M3 13l2-2M13 13l-2-2" stroke="#2a2a2a" />
        </Svg>
      </span>
      <Caret className="my-1.5 h-1 w-1.5" />
      <span className="mb-1 h-px w-6 bg-[#555]" />
      <Hand size={26} strokeWidth={1.2} />
      <Svg s={26}>
        <path d="M1 1l8 8M9 1L1 9M0 3V0h3M7 0h3v3M0 7v3h3" stroke="#2a2a2a" />
        <circle cx="10.500" cy="10" r="3" stroke="#2a2a2a" />
        <path d="M13 12l3 3" stroke="#2a2a2a" strokeWidth="1.600" />
      </Svg>
      <Caret className="my-1.5 h-1 w-1.5" />
      <Svg s={24}>
        <path d="M6.500 15V4H5l3-3 3 3H9.500v11zM6 6.500Q1 7 1 9t7 2 7-2-5-2.500M4 9l-3 2 3 2" stroke="#2a2a2a" />
      </Svg>
      <Caret className="my-1.5 h-1 w-1.5" />
      <span className="mb-1 h-px w-6 bg-[#555]" />
      <Svg s={24}>
        <path d="M.5 1h4v4h-4zM6 1h4v4H6zM11.500 1h4v4h-4zM.5 7h11v8H.5z" stroke="#2a2a2a" />
        <path d="M4 8.500L8.500 11 4 13.500z" fill="#2a2a2a" />
      </Svg>
      <Minus size={9} strokeWidth={3} className="mb-0.5 mr-0.5 mt-auto self-end rounded-full bg-[#333] text-[#555]" />
    </div>
  )
}

function CommandLine() {
  return (
    <div className="mb-px mt-auto flex w-[548px] max-w-full border border-l-0 border-[#555]">
      <div className="flex w-[29px] shrink-0 flex-col items-center bg-linear-to-b from-[#6a6a6a] to-[#2c2c2c] text-[#c4c4c4]">
        <span className="mt-1 h-2 w-[22px] border-y-2 border-dotted border-[#888]" />
        <button aria-label="关闭命令行" className="mt-2"><X size={16} strokeWidth={3.5} /></button>
        <button aria-label="自定义" className="mt-2"><Wrench size={18} fill="#b0b0b0" strokeWidth={1.2} className="-scale-x-100" /></button>
      </div>
      <div className="flex-1 border-l border-[#555] bg-[#8f8f8f] font-['DejaVu_Sans_Mono','Noto_Sans_CJK_SC',monospace] text-[18px] text-black">
        <div className="px-0.5 pb-[3px] pt-[22px]">
          {history.map((h, i) => (
            <p key={i} className="h-[23px] whitespace-pre leading-[23px]"><span className="text-[20px]">命令</span>: {h}</p>
          ))}
        </div>
        <div className="flex h-[26px] items-center border-t border-[#555] bg-[#b3b3b3] pl-1.5 pr-1.5">
          <span className="flex h-[18px] w-[19px] items-center justify-center rounded-sm border border-[#8d939b] bg-[#9aa1ab] text-[11px] font-bold text-[#445]">&gt;_</span>
          <Caret className="ml-1 h-[5px] w-[7px] text-[#666]" />
          <input aria-label="命令" defaultValue="_options" className="ml-0.5 w-0 flex-1 bg-transparent leading-[24px]" />
          <Caret className="rotate-180" />
        </div>
      </div>
    </div>
  )
}

function Viewport() {
  return (
    <main className="relative flex min-h-[640px] min-w-0 flex-1 flex-col bg-black">
      <p className="px-1 pt-1 text-[12px] leading-[18px] text-white">[−][俯视][二维线框]</p>
      <ViewCube />
      <NavBar />
      <CommandLine />
    </main>
  )
}

/* ---------- tool palette ---------- */

function Tile({ label, children }: { label: string; children: ReactNode }) {
  return (
    <button className="flex h-[103px] w-[66px] flex-col items-center text-[13px] leading-4 text-white">
      <span className="flex h-[66px] w-[66px] items-center justify-center bg-black">{children}</span>
      {label}
    </button>
  )
}

function Palette() {
  return (
    <aside className="flex w-[219px] shrink-0 flex-col pt-0.5">
      <div className="h-[26px] rounded-t bg-[#525252] px-1 pt-1.5"><Grip vertical /></div>
      <div className="mt-[3px] flex flex-1">
        <div className="flex flex-1 flex-col bg-[#3c3c3c] text-[13px] text-white">
          <div className="flex h-[15px] border border-[#2a2a2a] bg-[#484848] pl-3.5 text-[#777]">
            <button aria-label="列表" className="flex w-5 items-center justify-center"><List size={12} strokeWidth={3} /></button>
            <button aria-label="图标" className="flex w-5 items-center justify-center bg-[#2c2c2c] text-[#999]"><LayoutGrid size={11} fill="#999" /></button>
            <button aria-label="位置" className="flex w-5 items-center justify-center"><MapPin size={12} strokeWidth={3} /></button>
          </div>
          <PaletteHeader dark>文字注记</PaletteHeader>
          <div className="flex flex-1 flex-wrap content-start gap-x-[18px] pl-[21px] pt-[11px]">
            <Tile label="分类注记">
              <svg width="34" height="24" viewBox="0 0 34 24" aria-hidden="true">
                <path d="M14 1h5v5h-5zM1 18h5v5H1zM28 18h5v5h-5z" fill="#fff" />
                <path d="M16.500 5v7M3.500 19v-7h27v7" stroke="#fff" fill="none" />
              </svg>
            </Tile>
            <Tile label="通用注记">
              <svg width="30" height="26" viewBox="0 0 30 26" fill="none" aria-hidden="true">
                <path d="M1 3h2M5 3h24M1 13h2M5 13h18M1 23h2M5 23h10" stroke="#fff" strokeWidth="2" />
                <path d="M19 23l9-9" stroke="#fff" strokeWidth="3" />
              </svg>
            </Tile>
            <Tile label="变换字体">
              <span className="font-['Liberation_Serif',serif] text-[26px] font-bold leading-none">T</span>
            </Tile>
          </div>
          <PaletteHeader>特殊注记</PaletteHeader>
          <PaletteHeader>常用文字</PaletteHeader>
        </div>
        <div className="flex w-[29px] flex-col border-l border-[#2a2a2a] bg-[#454545]">
          <div className="h-3.5 pt-0.5"><Grip /></div>
          {paletteTabs.map((t, i) => (
            <button
              key={t}
              className={clsx(
                'flex h-16 flex-col items-center justify-center border-b border-[#2a2a2a] text-[12px] leading-[15px] text-white',
                i === 0 ? 'bg-[#454545]' : 'border-t-2 border-t-[#777] bg-[#5c5c5c]',
              )}
            >
              {t.split('').map((c, k) => <span key={k}>{c}</span>)}
            </button>
          ))}
        </div>
      </div>
      <div className="h-[5px] bg-[#5c5c5c]" />
    </aside>
  )
}

function PaletteHeader({ dark, children }: { dark?: boolean; children: ReactNode }) {
  return (
    <button className={clsx('flex h-7 items-center border-b border-[#2a2a2a] pl-4', dark ? 'bg-[#343434]' : 'bg-[#474747]')}>
      <span className="flex-1 text-center">{children}</span>
      <svg width="6" height="7" viewBox="0 0 6 7" className="self-end" aria-hidden="true"><path d="M6 0v7H0z" fill="#808080" /></svg>
    </button>
  )
}

/* ---------- status bar ---------- */

function LayoutTab({ active, className, children }: { active?: boolean; className?: string; children: ReactNode }) {
  return (
    <button className={clsx('relative h-[22px] text-[14px] leading-[20px]', active ? 'z-10 text-white' : 'text-[#aaa]', className)}>
      <svg className="absolute inset-0 h-full w-full" viewBox="0 0 80 22" preserveAspectRatio="none" aria-hidden="true">
        <path d="M0 0Q6 1 8 8l3 9q2 5 7 5h44q5 0 7-5l3-9q2-7 8-8z" fill={active ? '#787878' : '#505050'} stroke="#666" />
      </svg>
      <span className="relative">{children}</span>
    </button>
  )
}

function StatusGroup({ className, children }: { className?: string; children: ReactNode }) {
  return <div className={clsx('flex items-center justify-around border border-[#6e6e6e] bg-[#4d4d4d] text-white', className)}>{children}</div>
}

function StatusBtn({ name }: { name: string }) {
  return <button aria-label={name} className="flex"><Icon name={name} s={20} /></button>
}

function StatusBar() {
  return (
    <footer className="flex h-9 items-start border-t border-[#555] bg-[#383838]">
      <LayoutTab active className="ml-2 w-[70px]">模型</LayoutTab>
      <LayoutTab className="-ml-2 w-[94px]">Layout1</LayoutTab>
      <button aria-label="新建布局" className="ml-0.5 flex h-5 w-[27px] items-center justify-center rounded-bl-lg rounded-br-lg border border-[#5c5c5c] bg-[#454545] text-[#bbb]">
        <Plus size={13} strokeWidth={4} />
      </button>
      <div className="ml-auto flex h-[33px] bg-[#4d4d4d] text-[15px]">
        <StatusGroup className="w-[37px]"><button>模型</button></StatusGroup>
        <StatusGroup className="w-[82px]"><StatusBtn name="grid" /><StatusBtn name="snap" /><Caret /></StatusGroup>
        <StatusGroup className="w-[130px]"><StatusBtn name="ortho" /><StatusBtn name="polar" /><Caret /><StatusBtn name="iso" /><Caret /></StatusGroup>
        <StatusGroup className="w-[81px]"><StatusBtn name="otrack" /><StatusBtn name="osnap" /><Caret /></StatusGroup>
        <StatusGroup className="w-[134px]">
          <StatusBtn name="annoBlue" /><StatusBtn name="annoBolt" /><StatusBtn name="anno" />
          <button className="flex items-center gap-1">1:1<Caret /></button>
        </StatusGroup>
        <StatusGroup className="w-[51px]"><button aria-label="gear" className="flex"><Icon name="gear" s={17} /></button><Caret /></StatusGroup>
        <StatusGroup className="w-[32px]"><Plus size={22} className="text-[#c8c8c8]" /></StatusGroup>
        <StatusGroup className="w-[34px]"><StatusBtn name="isolate" /></StatusGroup>
        <StatusGroup className="w-[33px]"><StatusBtn name="hardware" /></StatusGroup>
        <StatusGroup className="w-[41px]"><button aria-label="graphWarn" className="flex"><Icon name="graphWarn" s={24} /></button></StatusGroup>
        <StatusGroup className="w-[62px]"><StatusBtn name="clean" /><StatusBtn name="lines" /></StatusGroup>
      </div>
    </footer>
  )
}

/* ---------- options dialog ---------- */

const dialogTabs = [
  ['文件', 'w-[59px] pl-3.5'],
  ['显示', 'w-[63px] pl-1.5'],
  ['打开和保存', 'w-[84px] pl-1'],
  ['打印和发布', 'w-[85px] pl-1'],
  ['系统', 'w-[60px] pl-1'],
  ['用户系统配置', 'w-[100px] pl-1'],
  ['绘图', 'w-[60px] pl-1'],
  ['三维建模', 'w-[70px] pl-1'],
  ['选择集', 'w-[60px] pl-1'],
  ['配置', 'w-[60px] pl-1'],
  ['联机', 'w-[59px] pl-1'],
]

// access key in brackets after a caption
function Key({ k, plain }: { k: string; plain?: boolean }) {
  return <span className="text-[13px]">(<span className={plain ? '' : 'underline underline-offset-2'}>{k}</span>)</span>
}

function Option({ id, label, k, checked, disabled, focus, plain, className }: {
  id: string; label: string; k?: string; checked?: boolean; disabled?: boolean; focus?: boolean; plain?: boolean; className?: string
}) {
  return (
    <div className={clsx('flex h-[18px] items-center gap-0.5', className)}>
      <Check id={id} checked={checked} disabled={disabled} />
      <label
        htmlFor={id}
        className={clsx('border px-px leading-4', focus ? 'border-dotted border-black' : 'border-transparent', disabled && 'text-[#838383]')}
      >
        {label}
        {k && <Key k={k} plain={plain} />}
      </label>
    </div>
  )
}

function Group({ title, k, className, children }: { title: string; k?: string; className?: string; children: ReactNode }) {
  return (
    <fieldset className={clsx('min-w-0 border border-[#dcdcdc]', className)}>
      <legend className="ml-[7px] h-[18px] px-0.5 leading-[18px]">{title}{k && <Key k={k} />}</legend>
      {children}
    </fieldset>
  )
}

function Field({ id, value, className }: { id: string; value: string; className?: string }) {
  return (
    <input
      id={id}
      defaultValue={value}
      className={clsx('h-[23px] shrink-0 rounded-sm border border-[#e6e6e6] border-b-[#868686] bg-white px-0.5 text-[13px]', className ?? 'w-16')}
    />
  )
}

function Slider({ label, value }: { label: string; value: number }) {
  return (
    <input
      type="range"
      aria-label={label}
      defaultValue={value}
      className="ml-[26px] h-[23px] w-[252px] appearance-none bg-transparent [&::-webkit-slider-runnable-track]:h-[5px] [&::-webkit-slider-runnable-track]:border [&::-webkit-slider-runnable-track]:border-[#d6d6d6] [&::-webkit-slider-runnable-track]:bg-[#e7eaea] [&::-webkit-slider-thumb]:-mt-3 [&::-webkit-slider-thumb]:h-[26px] [&::-webkit-slider-thumb]:w-3.5 [&::-webkit-slider-thumb]:appearance-none [&::-webkit-slider-thumb]:bg-[#0078d7]"
    />
  )
}

function DialogBtn({ primary, className, children }: { primary?: boolean; className?: string; children: ReactNode }) {
  return (
    <button className={clsx('rounded border bg-[#fdfdfd]', primary ? 'border-[#0067c0]' : 'border-[#d0d0d0] border-b-[#bcbcbc]', className)}>
      {children}
    </button>
  )
}

const precision = [
  ['arc', '100', '圆弧和圆的平滑度', 'A'],
  ['segments', '8', '每条多段线曲线的线段数', 'V'],
  ['render', '0.5', '渲染对象的平滑度', 'J'],
  ['contour', '4', '每个曲面的轮廓素线', 'O'],
]

const performance = [
  { id: 'ole', label: '利用光栅与 OLE 平移和缩放', k: 'P', icon: false, checked: false },
  { id: 'raster', label: '仅亮显光栅图像边框', k: 'R', icon: true, checked: true },
  { id: 'fill', label: '应用实体填充', k: 'Y', icon: true, checked: true },
  { id: 'frame', label: '仅显示文字边框', k: 'X', icon: true, checked: false },
  { id: 'silhouette', label: '绘制实体和曲面的真实轮廓', k: 'W', icon: false, checked: false },
]

function OptionsDialog() {
  const [tab, setTab] = useState('显示')

  return (
    <div className="fixed inset-0 z-20 flex items-center justify-center pb-[7px]">
      <section
        role="dialog"
        aria-label="选项"
        className="w-[938px] overflow-hidden rounded-lg bg-[#f0f0f0] font-['Liberation_Mono','Noto_Sans_CJK_SC',monospace] text-[15px] leading-[18px] text-black shadow-[0_24px_50px_rgba(0,0,0,0.5)]"
      >
        <div className="flex h-[37px] items-center bg-linear-to-r from-[#faf1f2] via-[#f3f3f3] to-[#faf0ec] pl-[9px] pr-[15px] font-['Noto_Sans','Noto_Sans_CJK_SC',sans-serif]">
          <span className="flex h-5 w-5 items-center justify-center bg-linear-to-b from-[#f6d8d4] to-[#e33a40]"><Icon name="logo" s={14} /></span>
          <h2 className="flex-1 pl-1.5">选项</h2>
          <button aria-label="关闭">
            <svg width="13" height="13" viewBox="0 0 13 13" fill="none" aria-hidden="true"><path d="M.5.5l12 12M12.500.5l-12 12" stroke="#111" strokeWidth="1.200" /></svg>
          </button>
        </div>

        <div className="flex h-[30px] items-center pl-4 text-[13px]">
          <span className="w-[143px]"><span className="text-[15px]">当前配置</span>:</span>
          <span className="w-[352px]">Cass10.1</span>
          <span className="w-[29px]"><Icon name="drawingFile" s={16} /></span>
          <span className="w-[149px]"><span className="text-[15px]">当前图形</span>:</span>
          <span>Drawing1.dwg</span>
        </div>

        <div className="flex h-6 items-end whitespace-nowrap pl-[18px]" role="tablist">
          {dialogTabs.map(([name, size]) => (
            <button
              key={name}
              role="tab"
              aria-selected={tab === name}
              onClick={() => setTab(name)}
              className={clsx('border border-b-0 border-[#e2e2e2] text-left', size, tab === name ? 'z-10 -mb-px h-[25px] bg-[#f9f9f9] pb-1' : 'h-[21px] border-l-0 bg-[#f2f2f2]')}
            >
              {name}
            </button>
          ))}
        </div>

        <div className="ml-4 mr-[18px] grid grid-cols-2 items-start gap-4 border border-[#e5e5e5] bg-[#f9f9f9] pb-[31px] pl-[13px] pr-[23px] pt-2.5">
          <div className="flex min-w-0 flex-col gap-[6px]">
            <Group title="窗口元素" className="pb-2">
              <div className="flex h-7 items-end pl-[15px]">
                <label htmlFor="scheme" className="w-28 leading-[23px]">配色方案<Key k="M" />：</label>
                <div className="relative flex">
                  <select id="scheme" className="h-[23px] w-[214px] appearance-none rounded-sm border border-[#d6d6d6] border-b-[#b0b0b0] bg-[#fdfdfd] pl-1 leading-[20px]">
                    <option>暗</option>
                    <option>明</option>
                  </select>
                  <svg width="10" height="6" viewBox="0 0 10 6" fill="none" className="pointer-events-none absolute right-[5px] top-2" aria-hidden="true"><path d="M.5.5L5 5 9.500.5" stroke="#444" /></svg>
                </div>
              </div>
              <div className="pl-[15px] pt-7">
                <Option id="scroll" label="在图形窗口中显示滚动条" k="S" />
                <Option id="bigbtn" label="在工具栏中使用大按钮" className="mt-2" />
                <Option id="ribbon" label="将功能区图标调整为标准大小" checked className="mt-1" />
                <Option id="tips" label="显示工具提示" k="T" checked className="mt-1.5" />
                <Option id="shortcut" label="在工具提示中显示快捷键" checked className="ml-8 mt-1" />
                <Option id="extended" label="显示扩展的工具提示" checked className="ml-8 mt-1.5" />
                <div className="ml-16 mt-2 flex h-[18px] items-center gap-2">
                  <Field id="delay" value="2" className="w-[37px]" />
                  <label htmlFor="delay" className="pb-1.5">延迟的秒数</label>
                </div>
                <Option id="rollover" label="显示鼠标悬停工具提示" className="mt-1" />
                <Option id="filetabs" label="显示文件选项卡" k="S" checked className="mt-1" />
                <div className="ml-[51px] mt-1 flex gap-[18px]">
                  <DialogBtn className="h-[22px] w-[126px]">颜色<Key k="C" /><span className="text-[13px]">...</span></DialogBtn>
                  <DialogBtn className="h-[22px] w-[110px]">字体<Key k="F" /><span className="text-[13px]">...</span></DialogBtn>
                </div>
              </div>
            </Group>

            <Group title="布局元素" className="pb-1">
              <div className="relative pl-[15px] pt-1">
                <Option id="layouttabs" label="显示布局和模型选项卡" k="L" plain checked />
                <Option id="printable" label="显示可打印区域" k="B" focus className="mt-1" />
                <Option id="paperbg" label="显示图纸背景" k="K" className="mt-2" />
                <Option id="papershadow" label="显示图纸阴影" k="E" checked disabled className="ml-[26px] mt-1.5" />
                <Option id="pagesetup" label="新建布局时显示页面设置管理器" k="G" plain className="mt-1" />
                <Option id="newviewport" label="在新布局中创建视口" k="N" checked className="mt-1.5" />
                <span className="pointer-events-none absolute left-1.5 top-5 h-20 w-[222px] border-4 border-[#ff0f00]" />
              </div>
            </Group>
          </div>

          <div className="flex min-w-0 flex-col gap-[5px]">
            <Group title="显示精度" className="pb-[7px]">
              <div className="flex flex-col gap-[5px] pl-4 pt-1.5">
                {precision.map(([id, value, label, k]) => (
                  <div key={id} className="flex h-[23px] items-center">
                    <span className="w-[31px]"><Icon name="drawingFile" s={16} /></span>
                    <Field id={id} value={value} />
                    <label htmlFor={id} className="pb-0.5 pl-[22px]">{label}<Key k={k} /></label>
                  </div>
                ))}
              </div>
            </Group>

            <Group title="显示性能" className="pb-[3px]">
              <div className="flex flex-col gap-[5px] pl-4 pt-[3px]">
                {performance.map((p) => (
                  <div key={p.id} className="flex h-[18px] items-center">
                    <span className="w-[31px]">{p.icon && <Icon name="drawingFile" s={16} />}</span>
                    <Option id={p.id} label={p.label} k={p.k} checked={p.checked} />
                  </div>
                ))}
              </div>
            </Group>

            <Group title="十字光标大小" k="Z" className="pb-[3px]">
              <div className="flex h-7 items-end pl-[15px]">
                <Field id="cursor" value="5" />
                <Slider label="十字光标大小" value={4} />
              </div>
            </Group>

            <Group title="淡入度控制" className="pb-[5px]">
              <div className="flex flex-col gap-[3px] pl-[15px] pt-[3px]">
                <label htmlFor="xref">外部参照显示<Key k="E" /></label>
                <div className="flex">
                  <Field id="xref" value="50" />
                  <Slider label="外部参照显示" value={77} />
                </div>
                <label htmlFor="inplace">在位编辑和注释性表达<Key k="I" /></label>
                <div className="flex">
                  <Field id="inplace" value="70" />
                  <Slider label="在位编辑和注释性表达" value={77} />
                </div>
              </div>
            </Group>
          </div>
        </div>

        <div className="flex justify-end gap-2.5 pb-[9px] pr-[17px] pt-[13px]">
          <DialogBtn primary className="h-6 w-[98px]">确定</DialogBtn>
          <DialogBtn className="h-6 w-[98px]">取消</DialogBtn>
          <DialogBtn className="h-6 w-[98px]">应用<Key k="A" /></DialogBtn>
          <DialogBtn className="h-6 w-[98px]">帮助<Key k="H" /></DialogBtn>
        </div>
      </section>
    </div>
  )
}

export default function App() {
  return (
    <div className="flex min-h-screen flex-col bg-[#5c5c5c] font-['Noto_Sans','Noto_Sans_CJK_SC',sans-serif]">
      <TitleBar />
      <MenuBar />
      <DocTabs />
      <Toolbar />
      <div className="flex flex-1">
        <LayerPanel />
        <DrawBar />
        <Viewport />
        <ViewBar />
        <Palette />
      </div>
      <StatusBar />
      <OptionsDialog />
    </div>
  )
}
